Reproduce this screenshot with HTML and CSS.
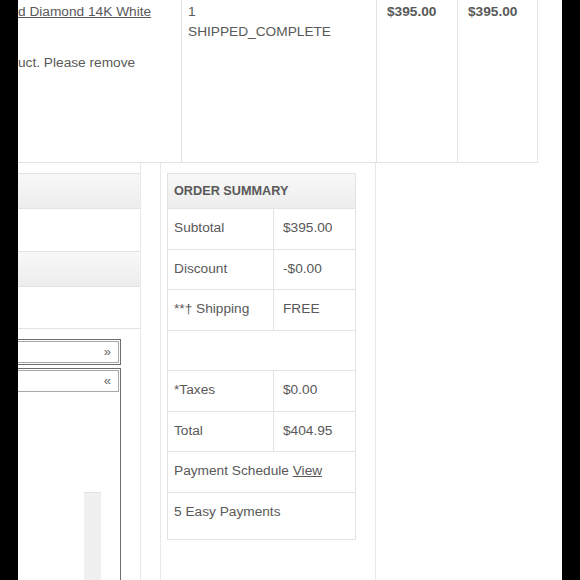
FILE: index.html
```html
<!DOCTYPE html>
<html lang="en">
<head>
  <meta charset="UTF-8">
  <meta name="viewport" content="width=device-width, initial-scale=1.0">
  <title>Order details</title>
  <link rel="stylesheet" href="styles.css">
</head>
<body>

  <main class="page">

    <table class="items">
      <tr>
        <td class="item-name">
          <a href="#">d Diamond 14K White</a>
          <p class="note">uct. Please remove</p>
        </td>
        <td class="item-status">1<br>SHIPPED_COMPLETE</td>
        <td class="item-price">$395.00</td>
        <td class="item-price">$395.00</td>
      </tr>
    </table>

    <div class="lower">

      <div class="side">
        <div class="panel">
          <div class="panel-head"></div>
          <div class="panel-body"></div>
          <div class="panel-head"></div>
          <div class="panel-body last"></div>
        </div>

        <div class="box">
          <div class="box-head">&raquo;</div>
        </div>

        <div class="box open">
          <div class="box-head">&laquo;</div>
          <div class="track"></div>
        </div>
      </div>

      <div class="summary-col">
        <table class="summary">
          <colgroup>
            <col class="label-col">
            <col class="value-col">
          </colgroup>
          <tr><th colspan="2">ORDER SUMMARY</th></tr>
          <tr><td>Subtotal</td><td class="value">$395.00</td></tr>
          <tr><td>Discount</td><td class="value">-$0.00</td></tr>
          <tr><td>**&dagger; Shipping</td><td class="value">FREE</td></tr>
          <tr><td colspan="2">&nbsp;</td></tr>
          <tr><td>*Taxes</td><td class="value">$0.00</td></tr>
          <tr><td>Total</td><td class="value">$404.95</td></tr>
          <tr><td colspan="2">Payment Schedule <a href="#">View</a></td></tr>
          <tr><td colspan="2" class="easy">5 Easy Payments</td></tr>
        </table>
      </div>

    </div>

  </main>

</body>
</html>
```

FILE: styles.css
```css
*, *::after, *::before {
  margin: 0;
  padding: 0;
  box-sizing: border-box;
}
body {
  background: #000;
  font-family: 'Liberation Sans', Arial, sans-serif;
  font-size: 13.7px;
  line-height: 20px;
  color: #595959;
}
a {
  color: #595959;
}
.page {
  width: 544px;
  height: 580px;
  margin: 0 18px;
  background: #fff;
  overflow: hidden;
}

/* top item row */
.items {
  border-collapse: separate;
  border-spacing: 0;
  table-layout: fixed;
  width: 520px;
}
.items td {
  vertical-align: top;
  height: 163px;
  padding: 2px 6px 0;
  border-right: 1px solid #e3e3e3;
  border-bottom: 1px solid #e3e3e3;
}
.items .item-name {
  width: 164px;
  padding-left: 0;
}
.item-name .note {
  margin-top: 31px;
}
.items .item-status {
  width: 195px;
}
.items .item-price {
  width: 81px;
  padding-left: 10px;
  font-weight: bold;
}
.items .item-price:last-child {
  width: 80px;
}

.lower {
  display: flex;
  align-items: flex-start;
  height: 420px;
}

/* left column */
.side {
  width: 123px;
  height: 100%;
  padding-top: 10px;
  border-right: 1px solid #e8e8e8;
}
.panel {
  border-top: 1px solid #e3e3e3;
}
.panel-head {
  height: 35px;
  background: linear-gradient(#f8f8f8, #ededed);
  border-bottom: 1px solid #e3e3e3;
}
.panel-body {
  height: 43px;
  border-bottom: 1px solid #e3e3e3;
}
.panel-body.last {
  height: 42px;
}
.box {
  margin: 10px 19px 0 0;
  padding: 1px 1px 1px 0;
  border: 1px solid #6f6f6f;
  border-left: none;
}
.box + .box {
  margin-top: 3px;
  height: 300px;
  border-bottom: none;
}
.box-head {
  height: 22px;
  padding-right: 7px;
  border: 1px solid #a8a8a8;
  border-left: none;
  text-align: right;
  font-size: 13px;
  line-height: 20px;
  color: #666;
}
.track {
  width: 17px;
  height: 120px;
  margin: 100px 0 0 66px;
  background: #f0f0f0;
  border-top: 1px solid #e2e2e2;
}

/* order summary */
.summary-col {
  width: 216px;
  height: 100%;
  margin-left: 19px;
  padding: 10px 0 0 6px;
  border-left: 1px solid #e8e8e8;
  border-right: 1px solid #e8e8e8;
}
.summary {
  border-collapse: separate;
  border-spacing: 0;
  table-layout: fixed;
  width: 189px;
  border-top: 1px solid #e3e3e3;
  border-left: 1px solid #e3e3e3;
}
.label-col {
  width: 106px;
}
.value-col {
  width: 82px;
}
.summary th, .summary td {
  text-align: left;
  vertical-align: top;
  border-right: 1px solid #e3e3e3;
  border-bottom: 1px solid #e3e3e3;
}
.summary th {
  height: 35px;
  padding: 8px 6px 0;
  font-size: 12.7px;
  line-height: 19px;
  background: linear-gradient(#f8f8f8, #ededed);
}
.summary td {
  height: 40.5px;
  padding: 9px 6px 0;
}
.summary .value {
  padding-left: 9px;
}
.summary .easy {
  height: 47px;
}
```
